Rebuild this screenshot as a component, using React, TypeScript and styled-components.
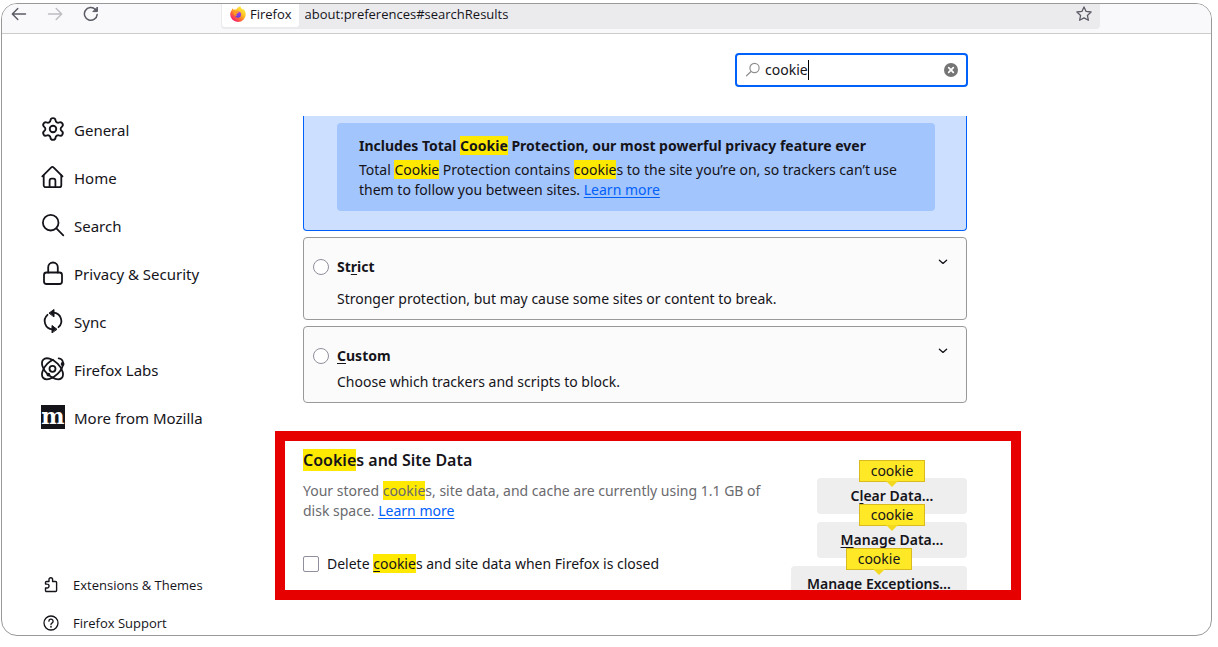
import React from 'react';
import styled, { createGlobalStyle, css } from 'styled-components';
import { Settings } from 'lucide-react';

const GlobalStyle = createGlobalStyle`
  *, *::before, *::after { box-sizing: border-box; }
  body {
    margin: 3px 6px 11px 1px;
    background: #fff;
    color: #15141a;
    font-family: "Noto Sans", "Open Sans", sans-serif;
    font-size: 14px;
    line-height: 20px;
  }
  h2, h3, p, ul { margin: 0; padding: 0; }
  button, input { font: inherit; color: inherit; }
  svg { display: block; flex: none; }
`;

const Frame = styled.div`
  display: flex;
  flex-direction: column;
  min-height: calc(100vh - 14px);
  border: 1px solid #999;
  border-radius: 16px;
  overflow: hidden;
`;

/* Browser toolbar */
const Toolbar = styled.header`
  display: flex;
  align-items: flex-start;
  gap: 20px;
  height: 30px;
  padding: 0 111px 0 9px;
  background: #f9f9fb;
  border-bottom: 1px solid #ccc;
  font-family: "Open Sans", "Noto Sans", sans-serif;
`;

const ToolButton = styled.button`
  display: flex;
  align-items: center;
  flex: none;
  width: 16px;
  height: 20px;
  padding: 0;
  border: 0;
  background: none;
  color: #5b5b66;
  &:disabled { color: #bdbdc2; }
`;

const UrlBar = styled.div`
  display: flex;
  align-items: flex-start;
  flex: 1;
  min-width: 0;
  height: 25px;
  margin-left: 102px;
  padding: 0 8px 0 1px;
  background: #ebebed;
  border-radius: 0 0 4px 4px;
`;

const Identity = styled.div`
  display: flex;
  align-items: center;
  gap: 4px;
  height: 23px;
  padding: 0 7px 4px 8px;
  background: #fff;
  border-radius: 0 0 3px 3px;
  font-size: 13px;
`;

const UrlInput = styled.input`
  flex: 1;
  min-width: 0;
  height: 19px;
  padding: 0 6px;
  border: 0;
  background: none;
  font-size: 13px;
  outline: none;
`;

/* Page shell */
const Page = styled.div`
  display: flex;
  flex: 1;
`;

const Sidebar = styled.aside`
  display: flex;
  flex-direction: column;
  justify-content: space-between;
  flex: 0 1 273px;
  padding: 72px 0 2px 39px;
`;

const NavList = styled.ul`
  list-style: none;
`;

const NavLink = styled.a`
  display: flex;
  align-items: center;
  gap: 9px;
  height: 48px;
  color: inherit;
  font-size: 15px;
  text-decoration: none;
  white-space: nowrap;
`;

const NavIcon = styled.span`
  padding-bottom: 2px;
`;

const FooterList = styled.ul`
  display: flex;
  flex-direction: column;
  gap: 18px;
  padding-left: 2px;
  list-style: none;
`;

const FooterLink = styled.a`
  display: flex;
  align-items: center;
  gap: 14px;
  color: inherit;
  font-family: "Open Sans", "Noto Sans", sans-serif;
  font-size: 13px;
  text-decoration: none;
`;

const MozillaMark = styled.span`
  display: flex;
  align-items: center;
  justify-content: center;
  width: 24px;
  height: 24px;
  padding-bottom: 2px;
  background: #15141a;
  color: #fff;
  font: bold 22px/20px "DejaVu Serif", serif;
`;

const Main = styled.main`
  flex: 0 1 746px;
  min-width: 0;
  padding-top: 19px;
`;

const SearchRow = styled.div`
  display: flex;
  justify-content: flex-end;
  margin: 0 53px 29px 28px;
`;

const SearchBox = styled.label`
  display: flex;
  align-items: center;
  width: 233px;
  height: 34px;
  padding: 0 7px 0 8px;
  border: 2px solid #0061fa;
  border-radius: 4px;
  background: #fff;
`;

const SearchInput = styled.input`
  field-sizing: content;
  min-width: 0;
  margin-left: 4px;
  padding: 0;
  border: 0;
  outline: none;
  background: none;
`;

const Caret = styled.span`
  width: 1px;
  height: 20px;
  background: #000;
`;

const ClearButton = styled.button`
  margin-left: auto;
  padding: 0;
  border: 0;
  background: none;
`;

/* Tracking protection options */
const Options = styled.div`
  display: flex;
  flex-direction: column;
  gap: 6px;
  margin: 0 54px 28px 28px;
`;

const StandardCard = styled.section`
  padding: 7px 31px 19px 33px;
  border: 1px solid #0061fa;
  border-top: 0;
  border-radius: 0 0 4px 4px;
  background: #ccdffe;
`;

const Callout = styled.div`
  display: flex;
  flex-direction: column;
  gap: 4px;
  padding: 13px 22px 11px;
  border-radius: 4px;
  background: #a3c5fd;
`;

const CalloutTitle = styled.h3`
  font-size: 14px;
  font-weight: 700;
`;

const OptionCard = styled.section<{ $gap: number }>`
  display: flex;
  flex-direction: column;
  gap: ${p => p.$gap}px;
  padding: 19px 17px 10px 9px;
  border: 1px solid #999;
  border-radius: 4px;
  background: #fbfbfb;
`;

const OptionHead = styled.div`
  display: flex;
  align-items: center;
  gap: 8px;
`;

const OptionLabel = styled.label`
  flex: 1;
  font-weight: 700;
`;

const OptionText = styled.p`
  padding-left: 24px;
`;

const controlBox = css`
  appearance: none;
  flex: none;
  width: 16px;
  height: 16px;
  margin: 0;
  border: 1px solid #8f8f9d;
  background: #fff;
`;

const Radio = styled.input`
  ${controlBox}
  border-radius: 50%;
`;

const Checkbox = styled.input`
  ${controlBox}
  border-radius: 2px;
`;

const ExpandButton = styled.button`
  align-self: flex-start;
  padding: 0;
  border: 0;
  background: none;
`;

const Match = styled.mark`
  background: #ffe900;
  color: inherit;
`;

const Key = styled.span`
  text-decoration: underline;
  text-underline-offset: 2px;
`;

const TextLink = styled.a`
  color: #0061fa;
  text-decoration: underline;
  text-underline-offset: 2px;
`;

/* Cookies and site data */
const CookieSection = styled.section`
  display: flex;
  align-items: flex-start;
  gap: 12px;
  padding: 0 44px 0 18px;
  border: 10px solid #e60000;
  overflow: hidden;
`;

const CookieInfo = styled.div`
  flex: 1;
  min-width: 0;
  padding-top: 7px;
`;

const SectionTitle = styled.h2`
  margin-bottom: 9px;
  font-size: 16px;
  font-weight: 600;
  line-height: 24px;
`;

const Description = styled.p`
  margin-bottom: 33px;
  color: #6a6a6e;
`;

const CheckRow = styled.label`
  display: flex;
  align-items: center;
  gap: 8px;
`;

const Actions = styled.div`
  display: flex;
  flex-direction: column;
  align-items: flex-end;
  gap: 8px;
  padding-top: 37px;
  margin-bottom: -12px;
`;

const ActionSlot = styled.div`
  position: relative;
`;

const ActionButton = styled.button`
  display: block;
  min-width: 150px;
  height: 36px;
  padding: 0 16px;
  border: 0;
  border-radius: 4px;
  background: #eeeeee;
  font-weight: 600;
`;

const MatchTip = styled.span`
  position: absolute;
  bottom: 32px;
  left: 50%;
  z-index: 1;
  width: 66px;
  height: 22px;
  border: 1px solid #d9bb20;
  background: #ffe926;
  text-align: center;
  transform: translateX(-50%);
  &::after {
    content: "";
    position: absolute;
    top: 20px;
    left: 26px;
    border: 6px solid transparent;
    border-top-color: #f3d820;
    border-bottom: 0;
  }
`;

const stroke = {
  fill: 'none',
  stroke: 'currentColor',
  strokeLinecap: 'round' as const,
  strokeLinejoin: 'round' as const,
};

const BackIcon = () => (
  <svg width="16" height="16" viewBox="0 0 16 16" {...stroke} strokeWidth="1.4">
    <path d="M14.5 8H1.5M6.8 2.5 1.3 8l5.5 5.5" />
  </svg>
);

const ForwardIcon = () => (
  <svg width="16" height="16" viewBox="0 0 16 16" {...stroke} strokeWidth="1.4">
    <path d="M1.5 8h13M9.2 2.5 14.7 8l-5.5 5.5" />
  </svg>
);

const ReloadIcon = () => (
  <svg width="16" height="16" viewBox="0 0 16 16" {...stroke} strokeWidth="1.5">
    <path d="M12.4 3.4A6.4 6.4 0 1 0 14.2 8.4" />
    <path d="M14.4 1.4v4.2h-4.2z" fill="currentColor" strokeWidth="1" />
  </svg>
);

const StarIcon = () => (
  <svg width="16" height="16" viewBox="0 0 16 16" {...stroke} strokeWidth="1.3">
    <path d="m8 .9 2.1 4.5 5 .6-3.7 3.4 1 4.9L8 11.9l-4.4 2.4 1-4.9L.9 6l5-.6z" />
  </svg>
);

const FirefoxLogo = () => (
  <svg width="16" height="16" viewBox="0 0 16 16">
    <defs>
      <linearGradient id="fxBody" x1="0.85" y1="0.1" x2="0.2" y2="0.9">
        <stop offset="0" stopColor="#fff04a" />
        <stop offset="0.4" stopColor="#ffbe1f" />
        <stop offset="0.7" stopColor="#ff6a36" />
        <stop offset="1" stopColor="#f5196f" />
      </linearGradient>
      <linearGradient id="fxGlobe" x1="0.7" y1="0" x2="0.3" y2="1">
        <stop offset="0" stopColor="#b03be8" />
        <stop offset="1" stopColor="#5a3fdc" />
      </linearGradient>
    </defs>
    <path fill="url(#fxBody)" d="M10.3.2c.3 1.4 1.4 2.2 2.4 3.2.3-.2.3-.6.2-1 1.7 1.3 2.9 3.6 2.9 6A7.8 7.6 0 0 1 8 15.9 7.7 7.6 0 0 1 .2 8.4c0-1.7.6-3.3 1.7-4.5l.3-1.7 1.3 1.5C4.4 3.3 5.3 3.3 6.2 3.6 7 1.9 8.7.9 10.3.2z" />
    <circle cx="8" cy="8.6" r="3.1" fill="url(#fxGlobe)" />
    <path fill="#ff9a24" d="M3.2 5.1c1.600-.8 3-.5 4.300.4l1.500.7c-.3.9-1.700 1-2.400 1.600-.4.6-.1 1.500.7 1.900-1.800.5-3.200-.5-3.700-2-.2-.9-.3-1.700-.4-2.600z" />
  </svg>
);

const HomeIcon = () => (
  <svg width="24" height="24" viewBox="0 0 24 24" {...stroke} strokeWidth="1.8">
    <path d="M1.3 11.3 10.3 2.3a1.5 1.5 0 0 1 2.2 0l9 9" />
    <path d="M2.7 10.2V20.2a2 2 0 0 0 2 2h13.6a2 2 0 0 0 2-2V10.2" />
    <path d="M8.600 22v-6.300a2 2 0 0 1 2-2h1.800a2 2 0 0 1 2 2V22" />
  </svg>
);

const SearchIcon = () => (
  <svg width="24" height="24" viewBox="0 0 24 24" {...stroke} strokeWidth="1.8">
    <circle cx="9.7" cy="9.7" r="7.8" />
    <path d="m15.4 15.4 6.9 6.9" />
  </svg>
);

const LockIcon = () => (
  <svg width="24" height="24" viewBox="0 0 24 24" {...stroke} strokeWidth="1.8">
    <rect x="3" y="11.5" width="18" height="11.5" rx="2.5" />
    <path d="M7.2 11.5V6.3a4.8 4.8 0 0 1 9.6 0v5.2" />
  </svg>
);

const SyncIcon = () => (
  <svg width="24" height="24" viewBox="0 0 24 24" {...stroke} strokeWidth="1.8">
    <path d="M12.500 3.700a8.300 8.300 0 0 1 5 14.500M11.500 20.300A8.300 8.300 0 0 1 6.500 5.800" />
    <path d="M8.300 3.900 13 .5v7zM15.700 20.100 11 16.500v7z" fill="currentColor" strokeWidth="1" />
  </svg>
);

const LabsIcon = () => (
  <svg width="24" height="24" viewBox="0 0 24 24" {...stroke} strokeWidth="1.8">
    <ellipse cx="11.5" cy="11.8" rx="13" ry="7.2" transform="rotate(45 11.5 11.8)" />
    <ellipse cx="11.5" cy="11.8" rx="13" ry="7.2" transform="rotate(-45 11.5 11.8)" strokeDasharray="52 6 12 0" strokeDashoffset="-3" />
    <circle cx="11.5" cy="11.8" r="3" />
    <circle cx="21.600" cy="7" r="1" fill="currentColor" />
    <circle cx="7.400" cy="17.600" r="1" fill="currentColor" />
  </svg>
);

const ExtensionIcon = () => (
  <svg width="16" height="16" viewBox="0 0 16 16" {...stroke} strokeWidth="1.4">
    <path d="M2.5 7V5.5a1 1 0 0 1 1-1H6V2.6a1.8 1.8 0 0 1 3.6 0v1.900h3a1 1 0 0 1 1 1v8a1 1 0 0 1-1 1H3.500a1 1 0 0 1-1-1V11h1.600a1.900 1.900 0 0 0 0-3.900z" />
  </svg>
);

const HelpIcon = () => (
  <svg width="16" height="16" viewBox="0 0 16 16" {...stroke} strokeWidth="1.3">
    <circle cx="8" cy="8" r="7" />
    <path d="M5.900 6.200a2.100 2.100 0 1 1 3.300 1.700C8.400 8.400 8 8.700 8 9.500" />
    <circle cx="8" cy="11.700" r="0.300" fill="currentColor" />
  </svg>
);

const FieldSearchIcon = () => (
  <svg width="16" height="16" viewBox="0 0 16 16" {...stroke} stroke="#8f8f8f" strokeWidth="1.2">
    <circle cx="9.5" cy="6" r="4.6" />
    <path d="M6 9.500 1.500 13.800" />
  </svg>
);

const ClearIcon = () => (
  <svg width="16" height="16" viewBox="0 0 16 16">
    <circle cx="8" cy="8" r="7" fill="#757575" />
    <path d="m5.700 5.700 4.600 4.600m0-4.600-4.600 4.600" stroke="#fff" strokeWidth="1.7" strokeLinecap="round" />
  </svg>
);

const ChevronIcon = () => (
  <svg width="12" height="12" viewBox="0 0 12 12" {...stroke} strokeWidth="1.3">
    <path d="m2.400 3.200 3.600 3.200 3.600-3.200" />
  </svg>
);

const navItems = [
  { label: 'General', icon: <Settings size={24} viewBox="1 1 22 22" strokeWidth={1.7} /> },
  { label: 'Home', icon: <HomeIcon /> },
  { label: 'Search', icon: <SearchIcon /> },
  { label: 'Privacy & Security', icon: <LockIcon /> },
  { label: 'Sync', icon: <SyncIcon /> },
  { label: 'Firefox Labs', icon: <LabsIcon /> },
  { label: 'More from Mozilla', icon: <MozillaMark aria-hidden="true">m</MozillaMark> },
];

type OptionProps = { id: string; title: React.ReactNode; text: string; gap: number };

const Option = ({ id, title, text, gap }: OptionProps) => (
  <OptionCard $gap={gap}>
    <OptionHead>
      <Radio type="radio" name="protection" id={id} />
      <OptionLabel htmlFor={id}>{title}</OptionLabel>
      <ExpandButton type="button" aria-label="Expand">
        <ChevronIcon />
      </ExpandButton>
    </OptionHead>
    <OptionText>{text}</OptionText>
  </OptionCard>
);

const Action = ({ children }: { children: React.ReactNode }) => (
  <ActionSlot>
    <ActionButton type="button">{children}</ActionButton>
    <MatchTip>cookie</MatchTip>
  </ActionSlot>
);

export default function App() {
  return (
    <>
      <GlobalStyle />
      <Frame>
        <Toolbar>
          <ToolButton type="button" aria-label="Back"><BackIcon /></ToolButton>
          <ToolButton type="button" aria-label="Forward" disabled><ForwardIcon /></ToolButton>
          <ToolButton type="button" aria-label="Reload"><ReloadIcon /></ToolButton>
          <UrlBar>
            <Identity><FirefoxLogo />Firefox</Identity>
            <UrlInput aria-label="Address" defaultValue="about:preferences#searchResults" />
            <ToolButton type="button" aria-label="Bookmark this page"><StarIcon /></ToolButton>
          </UrlBar>
        </Toolbar>
        <Page>
          <Sidebar>
            <nav>
              <NavList>
                {navItems.map(item => (
                  <li key={item.label}>
                    <NavLink href="#"><NavIcon>{item.icon}</NavIcon>{item.label}</NavLink>
                  </li>
                ))}
              </NavList>
            </nav>
            <FooterList>
              <li><FooterLink href="#"><ExtensionIcon />Extensions &amp; Themes</FooterLink></li>
              <li><FooterLink href="#"><HelpIcon />Firefox Support</FooterLink></li>
            </FooterList>
          </Sidebar>
          <Main>
            <SearchRow>
              <SearchBox>
                <FieldSearchIcon />
                <SearchInput type="text" aria-label="Find in Settings" defaultValue="cookie" />
                <Caret />
                <ClearButton type="button" aria-label="Clear"><ClearIcon /></ClearButton>
              </SearchBox>
            </SearchRow>
            <Options>
              <StandardCard>
                <Callout>
                  <CalloutTitle>
                    Includes Total <Match>Cookie</Match> Protection, our most powerful privacy feature ever
                  </CalloutTitle>
                  <p>
                    Total <Match>Cookie</Match> Protection contains <Match>cookie</Match>s to the site you’re on, so
                    trackers can’t use them to follow you between sites. <TextLink href="#">Learn more</TextLink>
                  </p>
                </Callout>
              </StandardCard>
              <Option
                id="strict"
                gap={12}
                title={<>St<Key>r</Key>ict</>}
                text="Stronger protection, but may cause some sites or content to break."
              />
              <Option
                id="custom"
                gap={6}
                title={<><Key>C</Key>ustom</>}
                text="Choose which trackers and scripts to block."
              />
            </Options>
            <CookieSection>
              <CookieInfo>
                <SectionTitle><Match>Cookie</Match>s and Site Data</SectionTitle>
                <Description>
                  Your stored <Match>cookie</Match>s, site data, and cache are currently using 1.1 GB of disk
                  space. <TextLink href="#">Learn more</TextLink>
                </Description>
                <CheckRow>
                  <Checkbox type="checkbox" />
                  <span>Delete <Match><Key>c</Key>ookie</Match>s and site data when Firefox is closed</span>
                </CheckRow>
              </CookieInfo>
              <Actions>
                <Action>C<Key>l</Key>ear Data…</Action>
                <Action><Key>M</Key>anage Data…</Action>
                <Action>Manage E<Key>x</Key>ceptions…</Action>
              </Actions>
            </CookieSection>
          </Main>
        </Page>
      </Frame>
    </>
  );
}
